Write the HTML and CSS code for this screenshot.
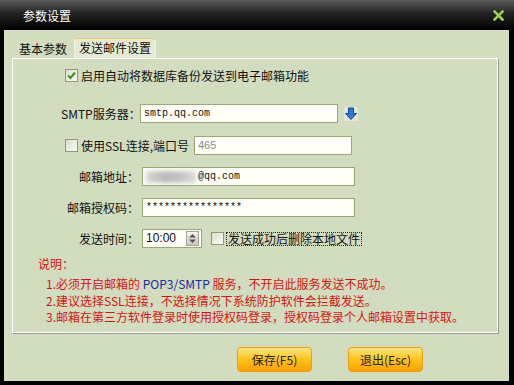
FILE: index.html
```html
<!DOCTYPE html>
<html lang="zh-CN">
<head>
<meta charset="UTF-8">
<title>参数设置</title>
<link rel="stylesheet" href="styles.css">
</head>
<body>
<div class="window">
  <div class="titlebar">
    <span class="title">参数设置</span>
    <svg class="close" width="11" height="11" viewBox="0 0 11 11"><path d="M1.5 1.5 L9.5 9.5 M9.5 1.5 L1.5 9.5" stroke="#9ad24e" stroke-width="2.6" stroke-linecap="square"/></svg>
  </div>
  <div class="client">
    <div class="tabs">
      <span class="tab">基本参数</span>
      <span class="tab active">发送邮件设置</span>
    </div>
    <div class="panel">
      <div class="row row-first">
        <span class="cb checked"><svg width="9" height="9" viewBox="0 0 9 9"><path d="M1 4.5 L3.5 7 L8 1.5" fill="none" stroke="#3f8f1f" stroke-width="2"/></svg></span>
        <span class="cb-text">启用自动将数据库备份发送到电子邮箱功能</span>
      </div>
      <div class="row row-smtp">
        <span class="lbl">SMTP服务器：</span>
        <div class="input smtp">smtp.qq.com</div>
        <span class="arrow"><svg width="14" height="14" viewBox="0 0 14 14"><path d="M4.5 1 H9.5 V6.5 H12.5 L7 12.5 L1.5 6.5 H4.5 Z" fill="#2f78d8" stroke="#12458f" stroke-width="1"/></svg></span>
      </div>
      <div class="row row-ssl">
        <span class="cb"></span>
        <span class="cb-text ssl">使用SSL连接,端口号</span>
        <div class="input port">465</div>
      </div>
      <div class="row">
        <span class="lbl">邮箱地址：</span>
        <div class="input wide"><span class="blur"></span>@qq.com</div>
      </div>
      <div class="row">
        <span class="lbl">邮箱授权码：</span>
        <div class="input wide">****************</div>
      </div>
      <div class="row">
        <span class="lbl">发送时间：</span>
        <div class="input time">10:00<span class="spin"><svg width="9" height="11" viewBox="0 0 9 11"><path d="M4.5 1 L8 4.5 H1 Z M4.5 10 L8 6.5 H1 Z" fill="#555"/></svg></span></div>
        <span class="cb small-gap"></span>
        <span class="focus-text">发送成功后删除本地文件</span>
      </div>
      <div class="notes">
        <div class="note-title">说明：</div>
        <div class="note first">1.必须开启邮箱的 <span class="blue">POP3/SMTP</span> 服务，不开启此服务发送不成功。</div>
        <div class="note">2.建议选择SSL连接，不选择情况下系统防护软件会拦截发送。</div>
        <div class="note">3.邮箱在第三方软件登录时使用授权码登录，授权码登录个人邮箱设置中获取。</div>
      </div>
    </div>
    <div class="buttons">
      <button class="btn">保存(F5)</button>
      <button class="btn">退出(Esc)</button>
    </div>
  </div>
</div>
</body>
</html>
```

FILE: styles.css
```css
body {
  margin: 0;
  background: #000;
  font-family: "Noto Sans CJK SC", "DejaVu Sans", sans-serif;
  font-size: 12px;
  color: #111;
}
.window {
  width: 514px;
  height: 385px;
  background: #000;
  display: flex;
  flex-direction: column;
}
.titlebar {
  height: 30px;
  display: flex;
  align-items: center;
  justify-content: space-between;
  padding: 0 10px 0 23px;
  background: linear-gradient(#5b5b5b, #222 45%, #000);
}
.title {
  color: #fff;
  font-size: 12px;
}
.close {
  display: block;
}
.client {
  flex: 1;
  margin: 0 5px 4px 4px;
  background: #d2dcbf;
  display: flex;
  flex-direction: column;
  padding: 9px 10px 0 8px;
}
.tabs {
  display: flex;
  height: 19px;
  align-items: flex-end;
  padding-left: 3px;
}
.tab {
  height: 18px;
  line-height: 17px;
  padding: 0 4px;
  font-size: 12px;
}
.tab.active {
  margin-left: 3px;
  padding: 0 4px 0 4px;
  height: 19px;
  background: #e6ead2;
  border: 1px solid #f4f2dc;
  border-top: 1px solid #f0c878;
  border-bottom: none;
  border-radius: 4px 4px 0 0;
}
.panel {
  flex: none;
  height: 274px;
  border: 1px solid #fff;
  border-right-color: #9c9c94;
  border-bottom-color: #9c9c94;
  box-shadow: inset -1px -1px 0 #fff;
  padding-left: 52px;
}
.row {
  display: flex;
  align-items: center;
  height: 19px;
  margin-top: 12px;
  white-space: nowrap;
}
.row-first {
  margin-top: 7px;
  height: 18px;
}
.row-smtp {
  margin-top: 20px;
}
.row-ssl {
  margin-top: 13px;
}
.cb {
  width: 11px;
  height: 11px;
  border: 1px solid #8d9a78;
  background: linear-gradient(135deg, #d9dfcc, #fbfcf6);
  display: flex;
  align-items: center;
  justify-content: center;
  flex: none;
}
.cb-text {
  margin-left: 3px;
}
.ssl {
  width: 113px;
}
.lbl {
  width: 78px;
  margin-left: -4px;
  margin-right: 1px;
  text-align: right;
  flex: none;
}
.input {
  box-sizing: border-box;
  height: 19px;
  border: 1px solid #9aa874;
  background: #fffff8;
  font-family: "Liberation Mono", "DejaVu Sans Mono", monospace;
  font-size: 10px;
  line-height: 17px;
  padding-left: 3px;
  display: flex;
  align-items: center;
  flex: none;
}
.smtp {
  width: 198px;
}
.port {
  width: 158px;
  color: #8a8a8a;
  font-family: "Liberation Sans", sans-serif;
  font-size: 11px;
}
.wide {
  width: 213px;
  margin-left: 2px;
}
.time {
  width: 60px;
  margin-left: 2px;
  font-family: "Liberation Sans", sans-serif;
  font-size: 12px;
  justify-content: space-between;
  padding-right: 2px;
}
.spin {
  width: 11px;
  height: 13px;
  background: linear-gradient(#f4f4f0, #c8c8c0);
  border: 1px solid #a0a098;
  display: flex;
  align-items: center;
  justify-content: center;
}
.blur {
  display: inline-block;
  width: 50px;
  height: 12px;
  margin-right: 2px;
  background: linear-gradient(90deg, #d8d8d8, #b8b8b8 40%, #c4c4c4 70%, #dcdcdc);
  filter: blur(2px);
}
.arrow {
  width: 14px;
  height: 14px;
  margin-left: 6px;
  background: #e4e6dc;
  display: flex;
}
.small-gap {
  margin-left: 9px;
}
.focus-text {
  margin-left: 2px;
  border: 1px dotted #222;
  line-height: 12px;
  padding: 0 1px;
}
.notes {
  margin-top: 8px;
  margin-left: -27px;
  color: #d41414;
}
.note-title {
  line-height: 16px;
}
.note {
  line-height: 16.5px;
  margin-left: 8px;
}
.note.first {
  margin-top: 4px;
}
.blue {
  color: #1c2aa8;
}
.buttons {
  display: flex;
  gap: 36px;
  padding-left: 225px;
  margin-top: 13px;
}
.btn {
  width: 75px;
  height: 25px;
  border: 1px solid #e6a010;
  border-radius: 4px;
  background: linear-gradient(#ffe680, #ffc21c 50%, #f9a200);
  font-family: "Noto Sans CJK SC", sans-serif;
  font-size: 12px;
  color: #222;
  padding: 0;
}
```
